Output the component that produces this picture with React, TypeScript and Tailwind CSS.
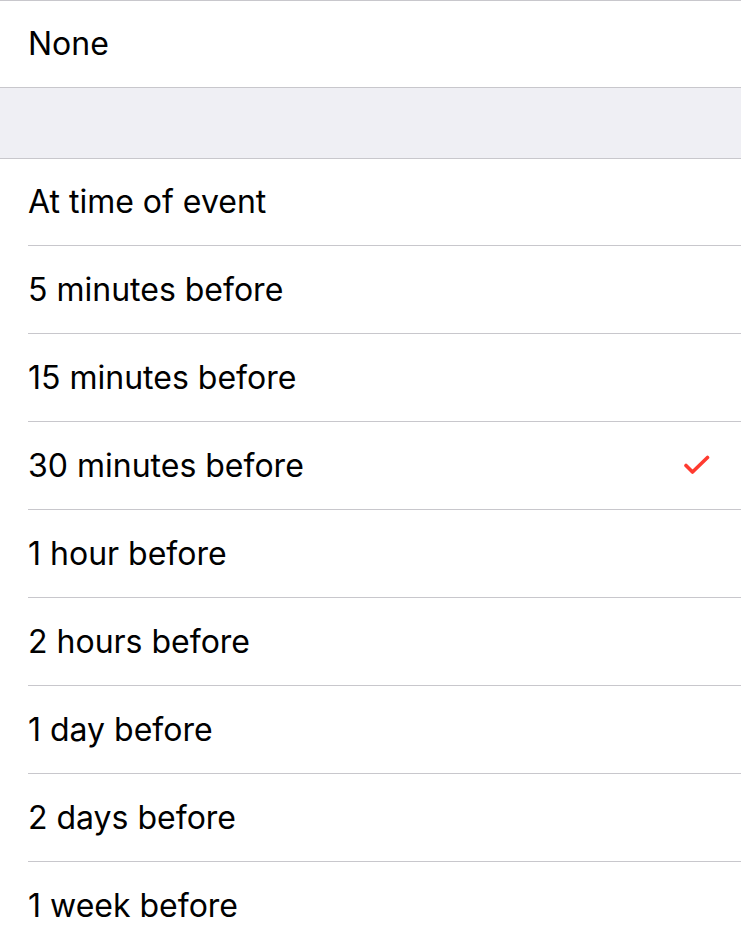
import React from "react";

const items = [
  "At time of event",
  "5 minutes before",
  "15 minutes before",
  "30 minutes before",
  "1 hour before",
  "2 hours before",
  "1 day before",
  "2 days before",
  "1 week before",
];

function Check() {
  return (
    <svg width="27" height="22" viewBox="0 0 27 22" fill="none">
      <path d="M2 10.5 L8.5 17 L23.5 2.5" stroke="#ff3b30" strokeWidth="3.6" strokeLinecap="round" strokeLinejoin="round" />
    </svg>
  );
}

export default function App() {
  return (
    <div className="w-[741px] h-[948px] overflow-hidden bg-white text-black" style={{ fontFamily: "Inter, 'Noto Sans', sans-serif" }}>
      <div className="border-t border-b border-[#c8c7cc] h-[88px] flex items-center pl-[28px] text-[32px]">None</div>
      <div className="h-[71px] bg-[#efeff4] border-b border-[#c8c7cc]" />
      {items.map((t, i) => (
        <div key={t} className="pl-[28px]">
          <div className={`${i === 0 ? "h-[87px]" : "h-[88px]"} flex items-center pr-[30px] text-[32px] ${i < items.length - 1 ? "border-b border-[#c8c7cc]" : ""}`}>
            <span className="flex-1">{t}</span>
            {t === "30 minutes before" && <Check />}
          </div>
        </div>
      ))}
    </div>
  );
}
